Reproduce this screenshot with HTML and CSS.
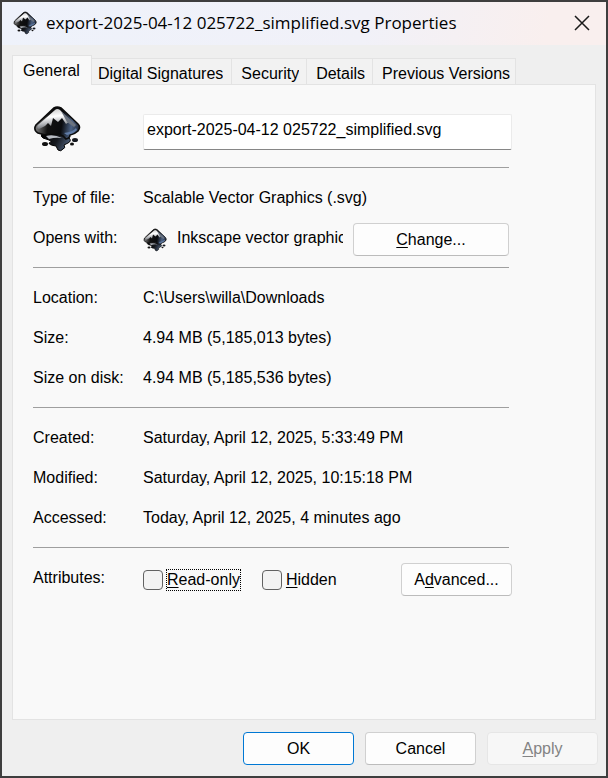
FILE: index.html
```html
<!DOCTYPE html>
<html lang="en">
<head>
    <meta charset="UTF-8">
    <meta name="viewport" content="width=device-width, initial-scale=1.0">
    <title>export-2025-04-12 025722_simplified.svg Properties</title>
    <link rel="stylesheet" href="styles.css">
</head>
<body>
    <!-- Inkscape icon, used in three places -->
    <svg class="defs" width="0" height="0" aria-hidden="true">
        <defs>
            <linearGradient id="shine" x1="0.3" y1="0" x2="0.5" y2="1">
                <stop offset="0" stop-color="#c8c8c8"/>
                <stop offset="0.4" stop-color="#ffffff"/>
                <stop offset="0.7" stop-color="#b4b6ba"/>
                <stop offset="1" stop-color="#55585e"/>
            </linearGradient>
            <linearGradient id="body" x1="0" y1="0.5" x2="1" y2="0.6">
                <stop offset="0" stop-color="#8a8a8a"/>
                <stop offset="0.3" stop-color="#111111"/>
                <stop offset="0.6" stop-color="#0a0b0e"/>
                <stop offset="0.82" stop-color="#4c6284"/>
                <stop offset="1" stop-color="#20293a"/>
            </linearGradient>
            <linearGradient id="drip" x1="0" y1="0" x2="1" y2="0.3">
                <stop offset="0" stop-color="#000000"/>
                <stop offset="0.6" stop-color="#15181e"/>
                <stop offset="1" stop-color="#46566f"/>
            </linearGradient>
            <symbol id="inkscape" viewBox="0 0 48 48">
                <path d="M9 29 L34 29 Q32 32 36 33 Q39 36 35 38 L31 40 Q33 43 30 44 Q28 47 25 45 L23 41 Q16 40 16 38 Q20 37 16 35 L10 33 Q7 31 9 29 Z" fill="url(#drip)" stroke="#000000"/>
                <path d="M21 3 Q24 1 28 3 L45 19 Q48 22 45 26 Q42 29 37 30 Q37 33 33 34 L30 31 Q22 27 12 30 L5 28 Q0 25 3 20 Z" fill="url(#body)" stroke="#0c0c0c" stroke-width="1.6"/>
                <path d="M22 5 Q24 3 27 5 L37 16 L33 19 L29 13 L25 17 L20 13 L18 21 L15 18 L12 21 L6 24 Q3 23 5 20 Z" fill="url(#shine)"/>
                <path d="M28 6 L43 20 L41 22 L34 17 Z" fill="#6c7480"/>
                <path d="M13 31 Q21 29 29 33 Q22 32 16 34 Z" fill="#b9bdc4"/>
                <path d="M31 28 Q40 27 43 23 L44 25 Q40 29 34 30 Z" fill="#5f7ba6"/>
                <ellipse cx="12" cy="39" rx="3" ry="2" fill="#111111"/>
                <ellipse cx="42" cy="35" rx="3" ry="2" fill="#14181f"/>
                <ellipse cx="39" cy="39" rx="2" ry="1.5" fill="#111111"/>
            </symbol>
        </defs>
    </svg>

    <div class="dialog">
        <header class="titlebar">
            <svg class="icon-small" aria-hidden="true"><use href="#inkscape"/></svg>
            <h1 class="title">export-2025-04-12 025722_simplified.svg Properties</h1>
            <button class="close" aria-label="Close">
                <svg width="16" height="16" viewBox="0 0 16 16">
                    <path d="M1 1 L15 15 M15 1 L1 15" stroke="#1a1a1a" stroke-width="1.5" fill="none"/>
                </svg>
            </button>
        </header>

        <div class="tabs" role="tablist">
            <button class="tab active" role="tab" aria-selected="true"><span>General</span></button>
            <button class="tab" role="tab"><span>Digital Signatures</span></button>
            <button class="tab" role="tab"><span>Security</span></button>
            <button class="tab" role="tab"><span>Details</span></button>
            <button class="tab" role="tab"><span>Previous Versions</span></button>
        </div>

        <main class="panel" role="tabpanel">
            <div class="file-header">
                <svg class="icon-large" aria-hidden="true"><use href="#inkscape"/></svg>
                <input class="filename" type="text" value="export-2025-04-12 025722_simplified.svg" aria-label="File name">
            </div>

            <dl class="section">
                <div class="row">
                    <dt>Type of file:</dt>
                    <dd>Scalable Vector Graphics (.svg)</dd>
                </div>
                <div class="row">
                    <dt>Opens with:</dt>
                    <dd class="opens-with">
                        <svg class="icon-small" aria-hidden="true"><use href="#inkscape"/></svg>
                        <span class="app-name">Inkscape vector graphics</span>
                        <button class="btn change"><span><u>C</u>hange...</span></button>
                    </dd>
                </div>
            </dl>

            <dl class="section">
                <div class="row">
                    <dt>Location:</dt>
                    <dd>C:\Users\willa\Downloads</dd>
                </div>
                <div class="row">
                    <dt>Size:</dt>
                    <dd>4.94 MB (5,185,013 bytes)</dd>
                </div>
                <div class="row">
                    <dt>Size on disk:</dt>
                    <dd>4.94 MB (5,185,536 bytes)</dd>
                </div>
            </dl>

            <dl class="section">
                <div class="row">
                    <dt>Created:</dt>
                    <dd>Saturday, April 12, 2025, 5:33:49 PM</dd>
                </div>
                <div class="row">
                    <dt>Modified:</dt>
                    <dd>Saturday, April 12, 2025, 10:15:18 PM</dd>
                </div>
                <div class="row">
                    <dt>Accessed:</dt>
                    <dd>Today, April 12, 2025, 4 minutes ago</dd>
                </div>
            </dl>

            <dl class="section">
                <div class="row">
                    <dt>Attributes:</dt>
                    <dd class="attributes">
                        <input type="checkbox" id="readonly">
                        <label class="focused" for="readonly"><u>R</u>ead-only</label>
                        <input type="checkbox" id="hidden">
                        <label for="hidden"><u>H</u>idden</label>
                        <button class="btn advanced"><span>A<u>d</u>vanced...</span></button>
                    </dd>
                </div>
            </dl>
        </main>

        <footer class="actions">
            <button class="btn default">OK</button>
            <button class="btn">Cancel</button>
            <button class="btn" disabled><span><u>A</u>pply</span></button>
        </footer>
    </div>
</body>
</html>
```
FILE: styles.css
```css
* {
    box-sizing: border-box;
}
body {
    margin: 0;
    padding: 2px;
    min-height: 100vh;
    display: flex;
    background-color: #3e3e3e;
    font-family: "Liberation Sans", Arial, sans-serif;
    font-size: 16px;
    line-height: 20px;
    color: #000;
}
button,
input {
    font: inherit;
    color: inherit;
    margin: 0;
}
u {
    text-underline-offset: 2px;
}
.defs {
    position: absolute;
}
.dialog {
    flex: 1;
    min-width: 0;
    display: flex;
    flex-direction: column;
    background-color: #efefef;
}

/* title bar */
.titlebar {
    display: flex;
    align-items: center;
    height: 43px;
    padding: 0 16px 2px 11px;
    background: linear-gradient(100deg, #eef2fb 0%, #f1f1f8 60%, #f9efee 90%);
}
.title {
    flex: 1;
    margin: 0 0 0 9px;
    font-family: "Open Sans", "Noto Sans", sans-serif;
    font-size: 17px;
    font-weight: 400;
    white-space: nowrap;
}
.close {
    display: flex;
    padding: 0;
    border: none;
    background: none;
}
.icon-small {
    width: 24px;
    height: 24px;
    flex: none;
}
.icon-large {
    width: 48px;
    height: 48px;
    flex: none;
}

/* tabs */
.tabs {
    display: flex;
    align-items: flex-end;
    padding: 10px 10px 0;
}
.tab {
    height: 26px;
    padding: 4px 7px 0 9px;
    border: 1px solid #e3e3e3;
    border-width: 1px 1px 0 0;
    background-color: #f2f2f2;
}
.tab span {
    display: block;
    height: 19px;
    overflow: hidden;
}
.tab:nth-child(2) {
    padding-left: 6px;
    padding-right: 8px;
}
.tab:last-child {
    padding-right: 5px;
}
.tab.active {
    height: 30px;
    margin-bottom: -1px;
    padding: 0 11px 0 10px;
    border-left-width: 1px;
    background-color: #f9f9f9;
    position: relative;
}
.tab.active span {
    height: 20px;
}

/* General page */
.panel {
    flex: 1;
    margin: 0 10px;
    padding: 20px 86px 20px 20px;
    border: 1px solid #e3e3e3;
    background-color: #f9f9f9;
}
.file-header {
    display: flex;
    align-items: center;
    gap: 62px;
    margin-right: -3px;
    padding-bottom: 14px;
}
.filename {
    flex: 1;
    min-width: 0;
    height: 36px;
    margin-top: 6px;
    padding: 0 3px 4px;
    border: 1px solid #ebebeb;
    border-bottom-color: #868686;
    border-radius: 2px;
    background-color: #fff;
}
.section {
    margin: 0;
    padding: 10px 0 9px;
    border-top: 1px solid #9f9f9f;
}
.row {
    display: flex;
    align-items: center;
    height: 40px;
}
dt {
    flex: none;
    width: 110px;
}
dd {
    flex: 1;
    min-width: 0;
    margin: 0;
    white-space: nowrap;
}
.opens-with,
.attributes {
    display: flex;
    align-items: center;
    padding-top: 3px;
}
.app-name {
    flex: 1;
    min-width: 0;
    margin: 0 10px;
    padding-bottom: 3px;
    overflow: hidden;
}
.btn {
    width: 111px;
    height: 33px;
    flex: none;
    padding: 0;
    border: 1px solid #d0d0d0;
    border-bottom-color: #bcbcbc;
    border-radius: 4px;
    background-color: #fdfdfd;
}
.change {
    width: 156px;
}
.attributes {
    margin-right: -3px;
}
.attributes label {
    margin: 0 21px 0 3px;
    border: 1px dotted transparent;
}
.attributes label.focused {
    border-color: #000;
}
.attributes input {
    appearance: none;
    width: 20px;
    height: 20px;
    flex: none;
    border: 1px solid #626262;
    border-radius: 4px;
    background-color: #f3f3f3;
}
.advanced {
    margin-left: auto;
}

/* bottom buttons */
.actions {
    display: flex;
    justify-content: flex-end;
    gap: 11px;
    padding: 12px 8px 11px;
}
.btn.default {
    border-color: #0078d4;
}
.btn:disabled {
    border-color: #e6e6e6;
    background-color: #f7f7f7;
    color: #838383;
}
```
